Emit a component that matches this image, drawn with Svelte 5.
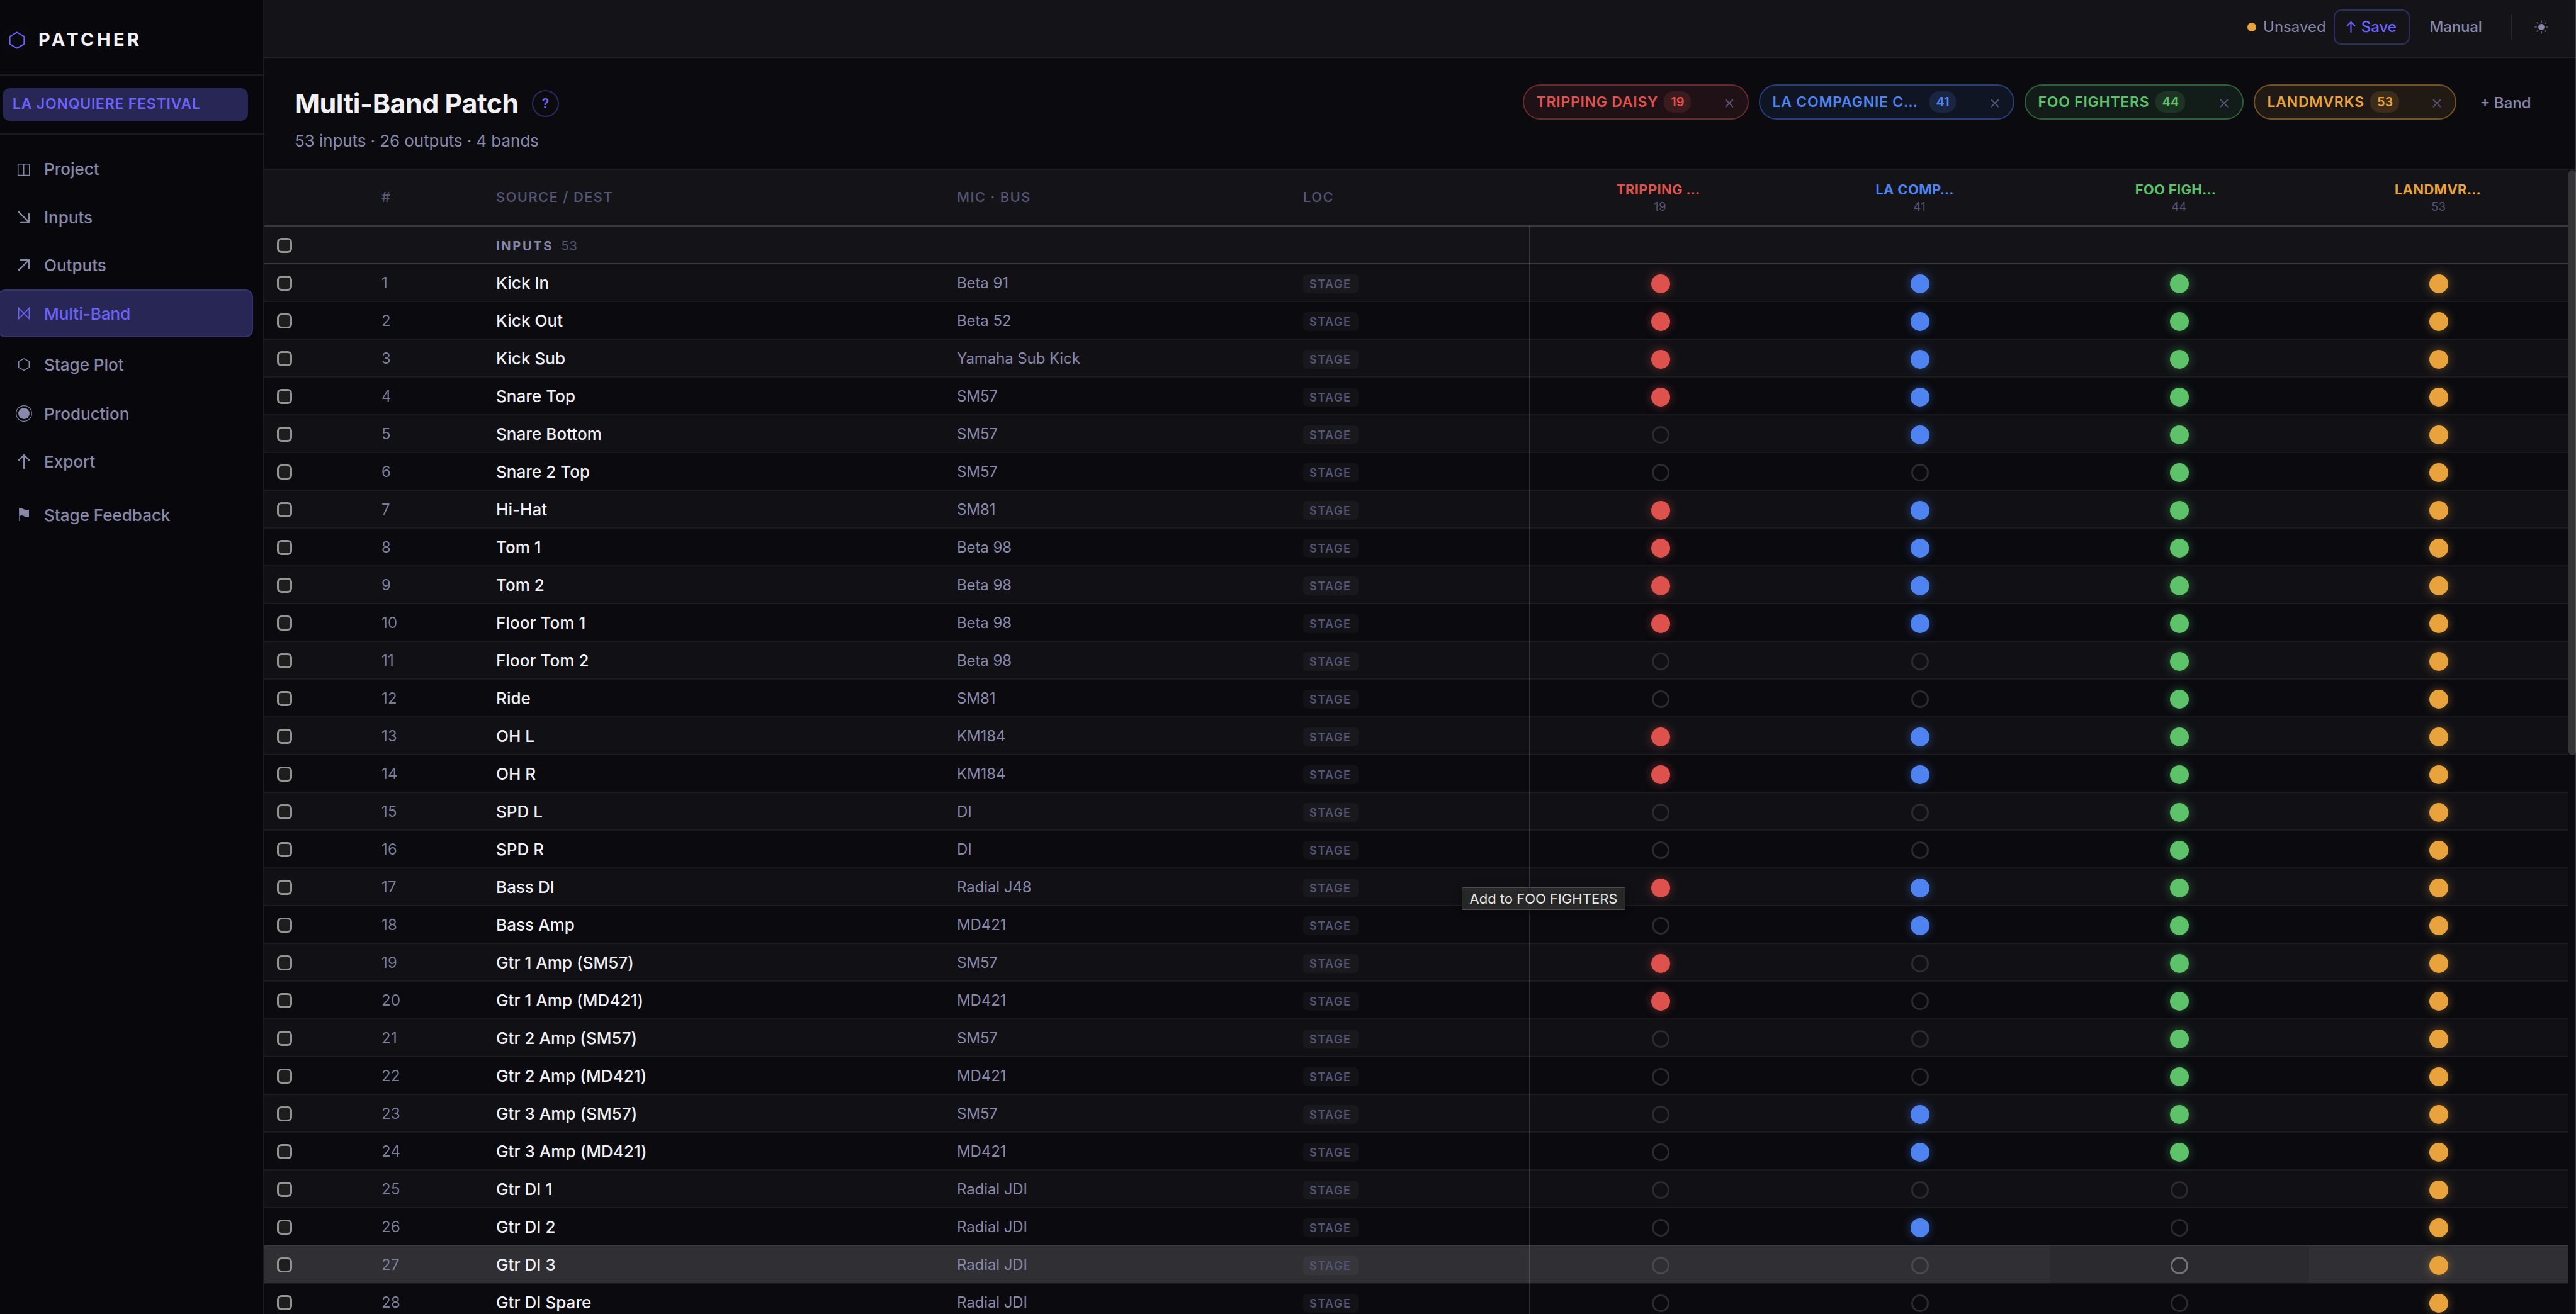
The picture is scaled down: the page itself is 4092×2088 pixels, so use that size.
<script>
  const bands = [
    { key: 'red', name: 'TRIPPING DAISY', short: 'TRIPPING …', count: 19 },
    { key: 'blue', name: 'LA COMPAGNIE C…', short: 'LA COMP…', count: 41 },
    { key: 'green', name: 'FOO FIGHTERS', short: 'FOO FIGH…', count: 44 },
    { key: 'orange', name: 'LANDMVRKS', short: 'LANDMVR…', count: 53 },
  ];

  // source, mic, one flag per band
  const inputs = [
    ['Kick In', 'Beta 91', '1111'],
    ['Kick Out', 'Beta 52', '1111'],
    ['Kick Sub', 'Yamaha Sub Kick', '1111'],
    ['Snare Top', 'SM57', '1111'],
    ['Snare Bottom', 'SM57', '0111'],
    ['Snare 2 Top', 'SM57', '0011'],
    ['Hi-Hat', 'SM81', '1111'],
    ['Tom 1', 'Beta 98', '1111'],
    ['Tom 2', 'Beta 98', '1111'],
    ['Floor Tom 1', 'Beta 98', '1111'],
    ['Floor Tom 2', 'Beta 98', '0011'],
    ['Ride', 'SM81', '0011'],
    ['OH L', 'KM184', '1111'],
    ['OH R', 'KM184', '1111'],
    ['SPD L', 'DI', '0011'],
    ['SPD R', 'DI', '0011'],
    ['Bass DI', 'Radial J48', '1111'],
    ['Bass Amp', 'MD421', '0111'],
    ['Gtr 1 Amp (SM57)', 'SM57', '1011'],
    ['Gtr 1 Amp (MD421)', 'MD421', '1011'],
    ['Gtr 2 Amp (SM57)', 'SM57', '0011'],
    ['Gtr 2 Amp (MD421)', 'MD421', '0011'],
    ['Gtr 3 Amp (SM57)', 'SM57', '0111'],
    ['Gtr 3 Amp (MD421)', 'MD421', '0111'],
    ['Gtr DI 1', 'Radial JDI', '0001'],
    ['Gtr DI 2', 'Radial JDI', '0101'],
    ['Gtr DI 3', 'Radial JDI', '0001'],
    ['Gtr DI Spare', 'Radial JDI', '0001'],
  ];

  const nav = ['Project', 'Inputs', 'Outputs', 'Multi-Band', 'Stage Plot', 'Production', 'Export', 'Stage Feedback'];
  const active = 'Multi-Band';
  const hovered = { row: 26, band: 2 };
</script>

<div class="app">
  <aside class="sidebar">
    <div class="brand">
      <svg class="logo" viewBox="0 0 28 28"><path d="M14 1.5 L25.4 8 V20.2 L14 26.6 L2.6 20.2 V8 Z" /></svg>
      <span>PATCHER</span>
    </div>
    <div class="project"><div class="project-name">LA JONQUIERE FESTIVAL</div></div>
    <nav>
      {#each nav as item}
        <div class="item" class:active={item === active}>
          <svg class="icon" viewBox="0 0 26 26">
            {#if item === 'Project'}
              <path d="M3.7 5.8 H21.8 V23.4 H3.7 Z M12.7 5.8 V23.4" />
            {:else if item === 'Inputs'}
              <path class="bold" d="M4.7 4.8 L21 21 M21 7.9 V21 H8" />
            {:else if item === 'Outputs'}
              <path class="bold" d="M4.7 21.3 L21 5 M8 5 H21 V18.1" />
            {:else if item === 'Multi-Band'}
              <path d="M4.7 4.6 V21.4 L21.3 4.6 V21.4 Z" />
            {:else if item === 'Stage Plot'}
              <path d="M13 3.8 L21.3 8.4 V17.8 L13 22.4 L4.7 17.8 V8.4 Z" />
            {:else if item === 'Production'}
              <circle class="thin" cx="13" cy="13" r="12.4" />
              <circle class="fill" cx="13" cy="13" r="9" />
            {:else if item === 'Export'}
              <path class="bold" d="M13 24 V3.2 M4.5 11.5 L13 3 L21.5 11.5" />
            {:else}
              <path class="fill" d="M5 2.5 H6.4 C10 1.9 13 4.6 15.5 5 C17.6 5.3 19.3 5 21 4.8 V16.8 C18 17.2 16.4 17.2 14 15.8 C11.4 14.2 9 14 6.7 14.8 V23 H5.4 Z" />
            {/if}
          </svg>
          <span>{item}</span>
        </div>
      {/each}
    </nav>
  </aside>

  <main>
    <div class="topbar">
      <span class="status"></span>
      <span class="unsaved">Unsaved</span>
      <button class="save">
        <svg viewBox="0 0 16 20"><path d="M8 19 V2 M1.6 8.4 L8 2 L14.4 8.4" /></svg>
        Save
      </button>
      <span class="manual">Manual</span>
      <span class="divider"></span>
      <svg class="sun" viewBox="0 0 22 22">
        <circle cx="11" cy="11" r="4.9" />
        <path d="M11 0.4 V4 M11 18 V21.6 M0.4 11 H4 M18 11 H21.6 M3.6 3.6 L6 6 M16 16 L18.4 18.4 M18.4 3.6 L16 6 M6 16 L3.6 18.4" />
      </svg>
    </div>

    <header>
      <div class="heading">
        <h1>Multi-Band Patch <span class="help">?</span></h1>
        <p>53 inputs · 26 outputs · 4 bands</p>
      </div>
      <div class="bands">
        {#each bands as band}
          <div class="pill {band.key}">
            <span class="pill-name">{band.name}</span>
            <span class="pill-count">{band.count}</span>
            <svg class="close" viewBox="0 0 14 14"><path d="M1 1 L13 13 M13 1 L1 13" /></svg>
          </div>
        {/each}
        <button class="add">+ Band</button>
      </div>
    </header>

    <div class="scroller">
      <div class="table">
        <div class="row head">
          <div></div>
          <div class="cell">#</div>
          <div class="cell">SOURCE / DEST</div>
          <div class="cell">MIC · BUS</div>
          <div class="cell">LOC</div>
          {#each bands as band}
            <div class="band-head {band.key}">
              <div class="band-name">{band.short}</div>
              <div class="band-count">{band.count}</div>
            </div>
          {/each}
        </div>

        <div class="row section">
          <div class="check"><span class="box"></span></div>
          <div></div>
          <div class="cell group">INPUTS <span>53</span></div>
          <div></div>
          <div class="loc"></div>
        </div>

        {#each inputs as [source, mic, flags], i}
          <div class="row input" class:odd={i % 2 === 0} class:hover={i === hovered.row}>
            <div class="check"><span class="box"></span></div>
            <div class="cell num">{i + 1}</div>
            <div class="cell source">{source}</div>
            <div class="cell mic">{mic}</div>
            <div class="cell loc"><span class="tag">STAGE</span></div>
            {#each bands as band, b}
              <div class="slot {band.key}" class:target={i === hovered.row && b === hovered.band}>
                <span class="dot" class:on={flags[b] === '1'}></span>
              </div>
            {/each}
          </div>
        {/each}
      </div>
      <div class="thumb"></div>
    </div>
  </main>

  <div class="edge"></div>
  <div class="tooltip">Add to FOO FIGHTERS</div>
</div>

<style>
  :global(body) {
    background: #0a0a0f;
    overflow: hidden;
  }

  .app {
    --accent: #6c63ff;
    --text: #f0f0f5;
    --muted: #8888aa;
    --dim: #555577;
    display: flex;
    position: relative;
    height: 2088px;
    overflow: hidden;
    background: #0a0a0f;
    color: var(--text);
    font-family: Inter, "Liberation Sans", sans-serif;
    font-size: 26px;
  }

  /* hairline over the right side of the window */
  .edge {
    position: absolute;
    top: 0;
    right: 0;
    bottom: 0;
    width: 2px;
    background: rgba(255, 255, 255, 0.2);
  }

  svg {
    display: block;
    flex: none;
    fill: none;
    stroke: currentColor;
    overflow: visible;
  }

  button {
    font: inherit;
    background: none;
    border: 0;
    padding: 0;
  }

  /* sidebar */
  .sidebar {
    box-sizing: border-box;
    flex: none;
    width: 420px;
    border-right: 2px solid #1b1b1f;
    background: #08080c;
  }

  .brand {
    display: flex;
    align-items: center;
    gap: 20px;
    box-sizing: border-box;
    height: 120px;
    padding: 6px 0 0 13px;
    border-bottom: 2px solid #1b1b1f;
    font-size: 29px;
    font-weight: 700;
    letter-spacing: 4.4px;
  }

  .logo {
    width: 28px;
    height: 28px;
    margin-top: 4px;
    stroke: var(--accent);
    stroke-width: 2;
    filter: drop-shadow(0 0 12px rgba(108, 99, 255, 0.2));
  }

  .project {
    padding: 20px 24px 20px 4px;
    border-bottom: 2px solid #1b1b1f;
  }

  .project-name {
    height: 52px;
    padding-left: 16px;
    border-radius: 12px;
    background: #282654;
    color: var(--accent);
    font-size: 23px;
    font-weight: 600;
    line-height: 51px;
    letter-spacing: 0.78px;
  }

  nav {
    display: grid;
    grid-template-rows: 76px 78px 74px 80px 82px 74px 78px 92px;
    align-items: center;
    padding-top: 16px;
  }

  .item {
    display: flex;
    align-items: center;
    gap: 19px;
    box-sizing: border-box;
    height: 76px;
    margin: 0 16px 0 -4px;
    padding-left: 27px;
    border: 2px solid transparent;
    border-radius: 12px;
    color: var(--muted);
    font-weight: 500;
  }

  .active {
    border-color: #363174;
    background: #282654;
    color: var(--accent);
  }

  .icon {
    width: 26px;
    height: 26px;
    stroke-width: 1.5;
  }

  .icon .bold {
    stroke-width: 2.4;
    stroke-linecap: round;
    stroke-linejoin: round;
  }

  .icon .thin {
    stroke-width: 1.1;
  }

  .icon .fill {
    fill: currentColor;
    stroke: none;
  }

  /* top bar */
  main {
    flex: 1;
    min-width: 0;
  }

  .topbar {
    display: flex;
    align-items: center;
    justify-content: flex-end;
    box-sizing: border-box;
    height: 92px;
    padding: 0 44.5px 5px 0;
    border-bottom: 2px solid #242428;
    background: #141418;
    color: var(--muted);
    font-size: 24px;
  }

  .status {
    width: 14px;
    height: 14px;
    margin-right: 11px;
    border-radius: 50%;
    background: #e8a33d;
  }

  .save {
    display: flex;
    align-items: center;
    justify-content: center;
    gap: 8.5px;
    box-sizing: border-box;
    width: 121px;
    height: 56px;
    margin: 0 32px 0 12px;
    border: 2px solid #2f2c63;
    border-radius: 12px;
    color: var(--accent);
    font-weight: 500;
  }

  .save svg {
    width: 15px;
    height: 19px;
    stroke-width: 2.2;
    stroke-linecap: round;
    stroke-linejoin: round;
  }

  .manual {
    font-weight: 500;
    letter-spacing: -0.2px;
  }

  .divider {
    width: 2px;
    height: 40px;
    margin: 0 35px 0 46px;
    background: #28282d;
  }

  .sun {
    width: 22px;
    height: 22px;
    stroke-width: 1.1;
  }

  .sun circle {
    fill: currentColor;
    stroke: none;
  }

  /* page header */
  header {
    display: flex;
    justify-content: space-between;
    box-sizing: border-box;
    height: 178px;
    padding: 42px 50px 0 48px;
    border-bottom: 2px solid #1c1c21;
  }

  h1 {
    display: flex;
    align-items: center;
    gap: 21px;
    height: 52px;
    margin: 4px 0 18px;
    font-size: 43px;
    font-weight: 700;
    letter-spacing: -0.5px;
  }

  .help {
    box-sizing: border-box;
    width: 43px;
    height: 43px;
    border: 2px solid #2d2a60;
    border-radius: 50%;
    color: var(--accent);
    font-size: 21px;
    font-weight: 600;
    line-height: 40px;
    text-align: center;
  }

  p {
    margin: 0;
    color: var(--muted);
    line-height: 32px;
    letter-spacing: -0.08px;
  }

  .bands {
    display: flex;
    align-items: flex-start;
    gap: 16px;
  }

  .pill {
    display: flex;
    align-items: center;
    box-sizing: border-box;
    height: 56px;
    padding: 0 22px 0 19.5px;
    border: 2px solid;
    border-radius: 28px;
    font-size: 23px;
    font-weight: 600;
    letter-spacing: 0.75px;
  }

  .pill-name {
    margin-right: 9px;
    padding-bottom: 1px;
  }

  .pill-count {
    height: 34px;
    padding: 0 10px 0 11px;
    border-radius: 15px;
    font-size: 20px;
    line-height: 34px;
    letter-spacing: 0;
  }

  .close {
    width: 14px;
    height: 14px;
    margin: 4px 0 0 auto;
    stroke: var(--dim);
    stroke-width: 2;
  }

  .pill.red {
    width: 359px;
    border-color: #6a2a2c;
    background: #1f1115;
    color: #e0524d;
  }

  .pill.red .pill-count {
    background: #3c1b1e;
  }

  .pill.blue {
    width: 406px;
    border-color: #274078;
    background: #101523;
    color: #4f83f0;
  }

  .pill.blue .pill-name {
    width: 240px;
  }

  .pill.blue .pill-count {
    background: #1a2541;
  }

  .pill.green {
    width: 348px;
    border-color: #2d6038;
    background: #121c18;
    color: #5dc26a;
  }

  .pill.green .pill-count {
    background: #1d3424;
  }

  .pill.orange {
    width: 322px;
    border-color: #755222;
    background: #211a14;
    color: #e8a33d;
  }

  .pill.orange .pill-count {
    background: #3d2c19;
  }

  .add {
    width: 124px;
    height: 58px;
    color: var(--muted);
    font-size: 24px;
    font-weight: 500;
  }

  /* patch table */
  .scroller {
    display: flex;
    align-items: flex-start;
  }

  .table {
    flex: 1;
    background: #141418;
  }

  .thumb {
    width: 12px;
    height: 930px;
    border-radius: 6px;
    background: #343437;
  }

  .row {
    display: grid;
    grid-template-columns: 162px 182px 732px 550px 385px repeat(4, 1fr);
    align-items: center;
    box-sizing: border-box;
    height: 60px;
    border: solid rgba(255, 255, 255, 0.055);
    border-width: 1px 0;
  }

  .head {
    height: 89px;
    border-width: 0 0 1px;
    border-color: #39393d;
    color: var(--dim);
    font-size: 22px;
    font-weight: 500;
    letter-spacing: 1.35px;
  }

  .section {
    border-color: #39393d;
  }

  .section + .input {
    border-top-color: #39393d;
  }

  .odd {
    background: #111115;
  }

  .input:not(.odd) {
    background-color: #0a0a0f;
  }

  .input.hover {
    background-color: #2f2f34;
  }

  .cell {
    padding-left: 24px;
    white-space: nowrap;
  }

  .head .cell {
    padding-bottom: 2px;
  }

  .check {
    padding: 2px 0 0 20px;
  }

  .box {
    display: block;
    box-sizing: border-box;
    width: 24px;
    height: 24px;
    border: 3px solid #949494;
    border-radius: 7px;
    background: #1e1e1e;
  }

  .group {
    padding-top: 4px;
    color: var(--muted);
    font-size: 20px;
    font-weight: 700;
    letter-spacing: 2.7px;
  }

  .group span {
    margin-left: 5px;
    color: var(--dim);
    font-weight: 400;
    letter-spacing: 0.8px;
  }

  .num {
    color: var(--muted);
    font-size: 24px;
    letter-spacing: 0.3px;
    opacity: 0.9;
  }

  .source {
    font-weight: 500;
    letter-spacing: 0.05px;
  }

  .mic {
    color: var(--muted);
    font-size: 24px;
    letter-spacing: -0.1px;
  }

  .loc {
    display: flex;
    align-items: center;
    box-sizing: border-box;
    height: 60px;
    margin: -1px 0;
    padding-top: 4px;
    border-right: 2px solid rgba(255, 255, 255, 0.14);
  }

  .tag {
    box-sizing: border-box;
    width: 88px;
    height: 30px;
    border-radius: 7px;
    background: rgba(255, 255, 255, 0.035);
    color: var(--dim);
    font-size: 18px;
    font-weight: 600;
    line-height: 31px;
    letter-spacing: 1.5px;
    text-indent: 10px;
  }

  .band-head {
    width: 140px;
    justify-self: center;
  }

  .band-name {
    font-size: 22px;
    font-weight: 700;
    line-height: 28px;
    letter-spacing: 0.3px;
  }

  .band-count {
    color: var(--dim);
    font-size: 18px;
    font-weight: 400;
    line-height: 27px;
    letter-spacing: 0.6px;
    text-align: center;
  }

  .slot {
    display: flex;
    align-items: center;
    justify-content: center;
    box-sizing: border-box;
    height: 58px;
    padding: 4px 0 0 1px;
  }

  .dot {
    box-sizing: border-box;
    width: 28px;
    height: 28px;
    border: 3px solid #2b2b30;
    border-radius: 50%;
  }

  .dot.on {
    width: 30px;
    height: 30px;
    border: 0;
    background: currentColor;
    box-shadow: 0 0 16px color-mix(in srgb, currentColor 45%, transparent);
  }

  .hover .dot:not(.on) {
    border-color: #49494d;
  }

  .hover .target {
    background: #2b2b2f;
  }

  .hover .target .dot {
    border-color: #737376;
  }

  .red {
    color: #de524d;
  }

  .blue {
    color: #4f83f0;
  }

  .green {
    color: #5dc26a;
  }

  .orange {
    color: #e8a33d;
  }

  .tooltip {
    position: absolute;
    left: 2322px;
    top: 1410px;
    box-sizing: border-box;
    width: 260px;
    height: 36px;
    border: 1px solid #4c4c4c;
    background: #272727;
    box-shadow: 0 2px 10px rgba(0, 0, 0, 0.5);
    color: #e8e8e8;
    font-size: 22px;
    line-height: 34px;
    text-align: center;
  }
</style>
